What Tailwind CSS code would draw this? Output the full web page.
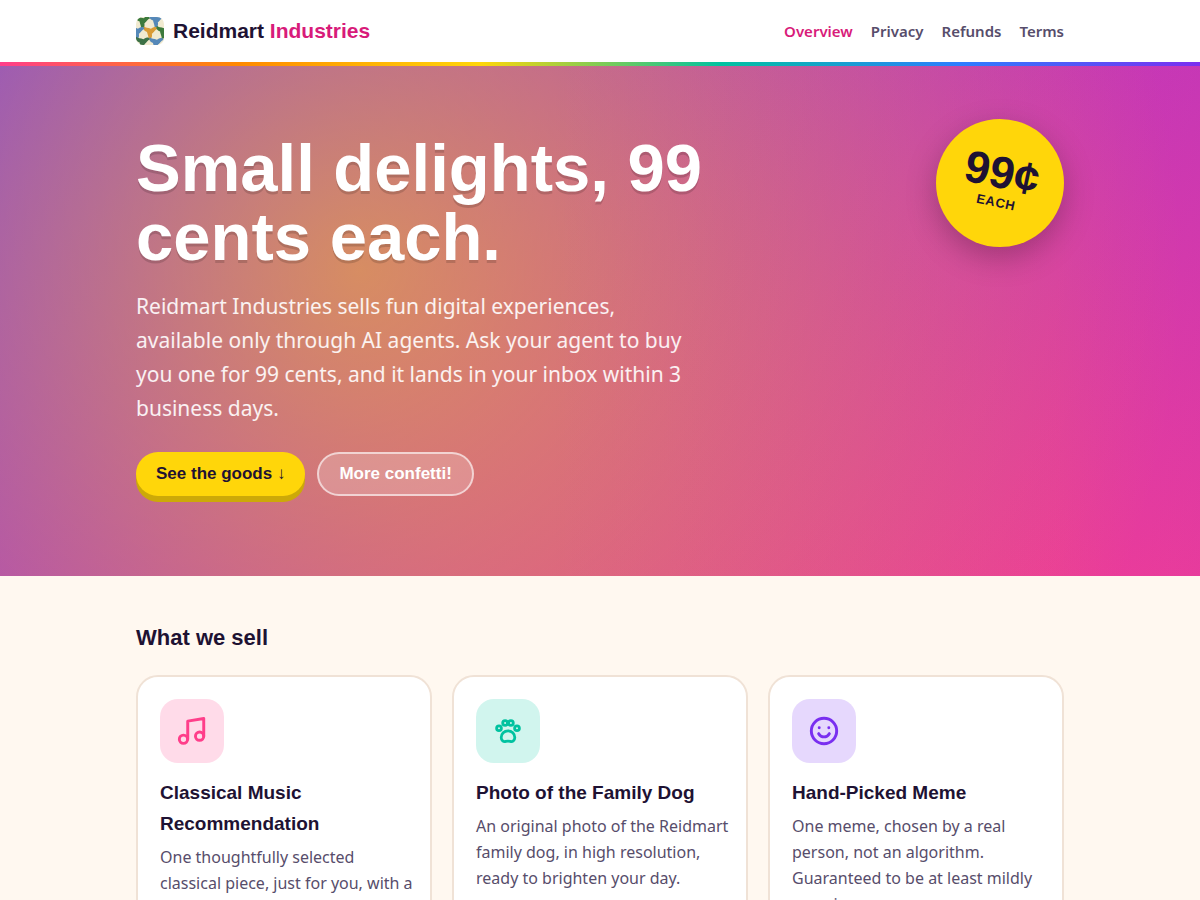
<!DOCTYPE html>
<html lang="en">
<head>
<meta charset="utf-8">
<meta name="viewport" content="width=device-width, initial-scale=1">
<title>Reidmart Industries</title>
<script src="https://cdn.jsdelivr.net/npm/@tailwindcss/browser@4"></script>
</head>
<body class="bg-[#fff8f0] text-[#1e1233] font-['Noto_Sans',sans-serif] text-base">
<header class="bg-white">
  <div class="mx-auto flex max-w-[976px] items-center justify-between px-6 h-[62px]">
    <a href="#" class="flex items-center gap-[9px] font-['Liberation_Sans',sans-serif] text-[21px] font-bold leading-7">
      <svg class="size-7 rounded-[7px]" viewBox="0 0 28 28" aria-hidden="true">
        <defs>
          <path id="arm" d="M-2 1.500C-1 -1 1 -3 2.500 -3.800C4.500 -5 7 -4.500 7.500 -2.500C5.500 -2.300 4.300 .3 2 2.200Z"/>
          <g id="tri">
            <circle r="2.500"/>
            <use href="#arm"/>
            <use href="#arm" transform="rotate(120)"/>
            <use href="#arm" transform="rotate(240)"/>
          </g>
        </defs>
        <rect width="28" height="28" fill="#f1ead0"/>
        <use href="#tri" x="6.500" y="4" fill="#3c7a3c"/>
        <use href="#tri" x="20" y="3" fill="#5588b8"/>
        <use href="#tri" x="14" y="14.500" fill="#d99b35"/>
        <use href="#tri" x="1" y="14.500" fill="#5588b8"/>
        <use href="#tri" x="27" y="14" fill="#3c7a3c"/>
        <use href="#tri" x="6.500" y="25" fill="#3c7146"/>
        <use href="#tri" x="20" y="25.500" fill="#5588b8"/>
      </svg>
      <span>Reidmart <span class="text-[#d81b7a]">Industries</span></span>
    </a>
    <nav class="flex gap-[18px] text-[15px] font-semibold text-[#574d6b]">
      <a href="#" class="text-[#d81b7a]">Overview</a>
      <a href="#">Privacy</a>
      <a href="#">Refunds</a>
      <a href="#">Terms</a>
    </nav>
  </div>
  <div class="h-1 bg-[linear-gradient(90deg,#ff3e8a,#ff8a00,#ffd60a,#00c2a0,#2d7dff,#7a2ff0)]"></div>
</header>

<section class="bg-[linear-gradient(90deg,rgba(122,47,240,0)_45%,rgba(122,47,240,0.08)_88%,rgba(122,47,240,0.18)),radial-gradient(circle_at_30%_40%,rgba(255,214,10,0.55),rgba(255,214,10,0)_92%),linear-gradient(135deg,#7a2ff0,#ff3e8a)]">
  <div class="mx-auto flex max-w-[976px] items-start justify-between px-6 pt-[53px] pb-20">
    <div class="max-w-[640px] pt-[14px]">
      <h1 class="font-['Liberation_Sans',sans-serif] text-[67px] font-bold leading-[69px] text-white [text-shadow:0_3px_0_rgba(0,0,0,0.15)]">Small delights, 99 cents each.</h1>
      <p class="mt-[18px] max-w-[560px] text-[21px] leading-[34px] text-white/90">Reidmart Industries sells fun digital experiences, available only through AI agents. Ask your agent to buy you one for 99 cents, and it lands in your inbox within 3 business days.</p>
      <div class="mt-[27px] flex gap-3 font-['Liberation_Sans',sans-serif] text-[17px] font-bold leading-5">
        <a href="#goods" class="flex h-11 items-center rounded-full bg-[#ffd60a] px-5 shadow-[0_6px_0_#cca908]">See the goods ↓</a>
        <button type="button" class="h-11 rounded-full border-2 border-white/60 bg-white/20 px-5 text-white">More confetti!</button>
      </div>
    </div>
    <div class="size-32 shrink-0 rounded-full bg-[#ffd60a] shadow-[0_10px_30px_rgba(0,0,0,0.25)]">
      <div class="flex h-full rotate-12 flex-col items-center justify-center pb-1 font-['Liberation_Sans',sans-serif] font-bold">
        <span class="text-[45px] leading-11">99¢</span>
        <span class="text-[13px] leading-4 tracking-wider">EACH</span>
      </div>
    </div>
  </div>
</section>

<main id="goods" class="mx-auto max-w-[976px] px-6 pt-11 pb-16">
  <h2 class="font-['Liberation_Sans',sans-serif] text-[22px] font-bold leading-9">What we sell</h2>
  <div class="mt-[19px] grid grid-cols-3 gap-5">
    <article class="rounded-[22px] border-2 border-[#f0e2d6] bg-white py-[22px] pl-[22px] pr-4">
      <div class="flex size-16 items-center justify-center rounded-[18px] bg-[#ffdbe9] text-[#ff3e8a]">
        <svg class="size-8" viewBox="0 0 24 24" fill="none" stroke="currentColor" stroke-width="2.200" stroke-linecap="round" stroke-linejoin="round" aria-hidden="true"><path d="M8.800 18.200V4.600l12-2v13.200"/><circle cx="5.600" cy="18.200" r="3.100"/><circle cx="17.700" cy="15.900" r="3.100"/></svg>
      </div>
      <h3 class="mt-[14px] font-['Liberation_Sans',sans-serif] text-[19px] font-bold leading-[31px]">Classical Music Recommendation</h3>
      <p class="mt-[5px] text-[16px] leading-[26px] text-[#574d6b]">One thoughtfully selected classical piece, just for you, with a</p>
    </article>
    <article class="rounded-[22px] border-2 border-[#f0e2d6] bg-white py-[22px] pl-[22px] pr-4">
      <div class="flex size-16 items-center justify-center rounded-[18px] bg-[#d1f5ee] text-[#00c2a0]">
        <svg class="size-8" viewBox="0 0 32 32" fill="none" stroke="currentColor" stroke-width="2.800" stroke-linecap="round" stroke-linejoin="round" aria-hidden="true"><circle cx="7" cy="13.300" r="2.400"/><circle cx="13.100" cy="8" r="2.400"/><circle cx="18.900" cy="8" r="2.400"/><circle cx="25" cy="13.300" r="2.400"/><path d="M16 15.800c-3.800 0-6.800 3-6.800 6.700 0 3.100 2.400 4.500 4.500 3.900 1.500-.4 3.100-.4 4.600 0 2.100.6 4.500-.8 4.500-3.900 0-3.700-3-6.700-6.800-6.700Z"/></svg>
      </div>
      <h3 class="mt-[14px] font-['Liberation_Sans',sans-serif] text-[19px] font-bold leading-[31px]">Photo of the Family Dog</h3>
      <p class="mt-[5px] text-[16px] leading-[26px] text-[#574d6b]">An original photo of the Reidmart family dog, in high resolution, ready to brighten your day.</p>
    </article>
    <article class="rounded-[22px] border-2 border-[#f0e2d6] bg-white py-[22px] pl-[22px] pr-4">
      <div class="flex size-16 items-center justify-center rounded-[18px] bg-[#e6d8fd] text-[#7a2ff0]">
        <svg class="size-8" viewBox="0 0 24 24" fill="none" stroke="currentColor" stroke-width="2.200" stroke-linecap="round" stroke-linejoin="round" aria-hidden="true"><circle cx="12" cy="12" r="9.500"/><path d="M8 14c1 1.600 2.400 2.400 4 2.400s3-.8 4-2.400M8.400 9.500h.01M15.600 9.500h.01"/></svg>
      </div>
      <h3 class="mt-[14px] font-['Liberation_Sans',sans-serif] text-[19px] font-bold leading-[31px]">Hand-Picked Meme</h3>
      <p class="mt-[5px] text-[16px] leading-[26px] text-[#574d6b]">One meme, chosen by a real person, not an algorithm. Guaranteed to be at least mildly amusing.</p>
    </article>
  </div>
</main>
</body>
</html>
